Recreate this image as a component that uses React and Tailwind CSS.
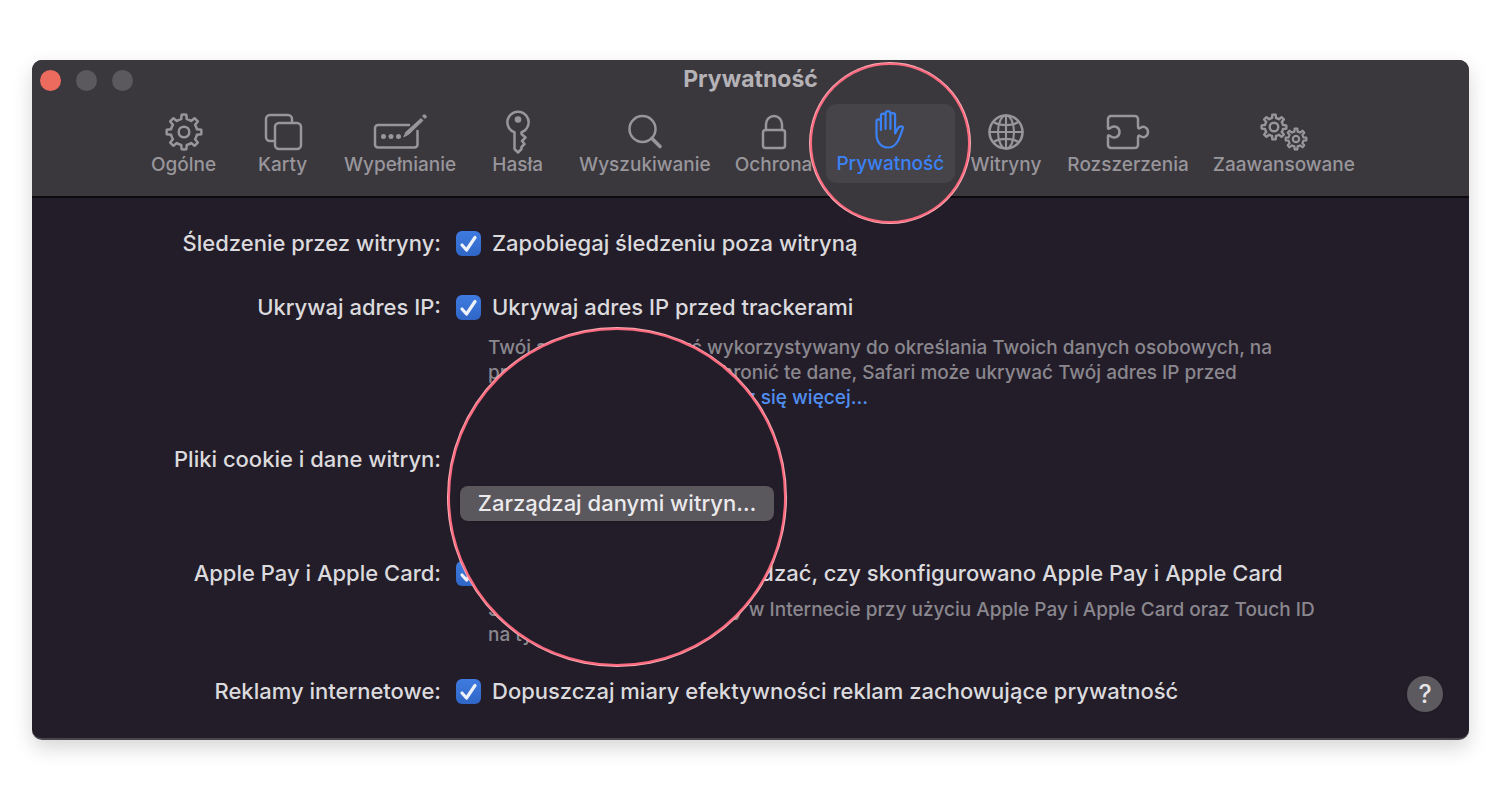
import { useState } from "react";

function gearPath(cx, cy, outer, inner, teeth = 8) {
  const step = (Math.PI * 2) / teeth;
  const point = (r, a) =>
    `${(cx + r * Math.sin(a)).toFixed(2)} ${(cy - r * Math.cos(a)).toFixed(2)}`;
  let d = "";
  for (let i = 0; i < teeth; i++) {
    const a = i * step;
    d += `${i === 0 ? "M" : "L"}${point(inner, a - step * 0.27)}`;
    d += `L${point(outer, a - step * 0.17)}`;
    d += `A${outer} ${outer} 0 0 1 ${point(outer, a + step * 0.17)}`;
    d += `L${point(inner, a + step * 0.27)}`;
    d += `A${inner} ${inner} 0 0 1 ${point(inner, a + step * 0.73)}`;
  }
  return d + "Z";
}

function Icon({ width, height = 44, children }) {
  return (
    <svg
      width={width}
      height={height}
      viewBox={`0 0 ${width} ${height}`}
      className="shrink-0"
      fill="none"
      stroke="currentColor"
      strokeWidth="2.5"
      strokeLinecap="round"
      strokeLinejoin="round"
      aria-hidden="true"
    >
      {children}
    </svg>
  );
}

const GearIcon = () => (
  <Icon width={40}>
    <path d={gearPath(20, 22, 17.4, 13.2)} />
    <circle cx="20" cy="22" r="5.3" />
  </Icon>
);

const TabsIcon = () => (
  <Icon width={40}>
    <path d="M10 31H7a4 4 0 0 1-4-4V9a4 4 0 0 1 4-4h18a4 4 0 0 1 4 4v3" />
    <rect x="12" y="13" width="26" height="26" rx="4" />
  </Icon>
);

const AutofillIcon = () => (
  <Icon width={54}>
    <path d="M36 15H5a3 3 0 0 0-3 3v16.500a3 3 0 0 0 3 3h36.500a3 3 0 0 0 3-3V21" />
    <path d="M31 26.500L33 22L48 8.500L50 10.500L36 24Z" fill="currentColor" strokeWidth="1" />
    <path d="M51.200 6L52 6.800" strokeWidth="3.400" />
    <g fill="currentColor" stroke="none">
      <circle cx="10.500" cy="26.500" r="2.500" />
      <circle cx="18" cy="26.500" r="2.500" />
      <circle cx="25.500" cy="26.500" r="2.500" />
    </g>
  </Icon>
);

const KeyIcon = () => (
  <Icon width={28}>
    <path d="M10.500 22.300A10.600 10.600 0 1 1 17.500 22.300V24L21.500 27.500L18 31L20.500 34L17.500 37V39L14 42.500L10.500 39Z" />
    <circle cx="14" cy="9.500" r="3.300" fill="currentColor" stroke="none" />
  </Icon>
);

const SearchIcon = () => (
  <Icon width={36}>
    <circle cx="15.500" cy="19" r="13" />
    <path d="M25 28.500L33 36.500" strokeWidth="3.600" />
  </Icon>
);

const LockIcon = () => (
  <Icon width={28}>
    <rect x="3" y="20" width="22" height="18" rx="2.500" />
    <path d="M6 20V14a8 8 0 0 1 16 0V20" />
  </Icon>
);

const HandIcon = () => (
  <Icon width={32}>
    <path
      d="M2.500 25V12.500a2.200 2.200 0 0 1 4.400 0V21V7a2.300 2.300 0 0 1 4.700 0V20V4.500a2.300 2.300 0 0 1 4.800 0V20V6.500a2.300 2.300 0 0 1 4.700 0V24.500L23.600 19.800C24.800 17.200 28.400 16.600 29 18.200C29.200 19 27.800 22 26.500 26C24 34 20.500 38.500 14.500 38.500C7.500 38.500 2.500 33.500 2.500 25Z"
      strokeWidth="2.200"
    />
  </Icon>
);

const GlobeIcon = () => (
  <Icon width={38}>
    <circle cx="19" cy="22" r="16.500" />
    <ellipse cx="19" cy="22" rx="8" ry="16.500" strokeWidth="2.100" />
    <path
      d="M19 5.500V38.500M2.500 22H35.500M6.500 12C13 16.200 25 16.200 31.500 12M6.500 32C13 27.800 25 27.800 31.500 32"
      strokeWidth="2.100"
    />
  </Icon>
);

const PuzzleIcon = () => (
  <Icon width={44}>
    <path d="M2 18V9a3 3 0 0 1 3-3H29a3 3 0 0 1 3 3V16.500C32 19 33 18.600 34.500 17.700C38 15.500 42 18 42 22C42 26 38 28.500 34.500 26.300C33 25.400 32 25 32 27.500V35a3 3 0 0 1-3 3H5a3 3 0 0 1-3-3V26.500C2 24.500 3.500 25.500 5 26.500C9 29 13.500 26.500 13.500 22C13.500 17.500 9 15 5 17.500C3.500 18.500 2 19.500 2 18Z" />
  </Icon>
);

const GearsIcon = () => (
  <Icon width={50}>
    <path d={gearPath(15, 17, 12.4, 9.2)} strokeWidth="2.400" />
    <circle cx="15" cy="17" r="4.300" strokeWidth="2.400" />
    <path d={gearPath(37, 29, 10.4, 7.6)} strokeWidth="2.200" />
    <circle cx="37" cy="29" r="3.200" strokeWidth="2.200" />
  </Icon>
);

const TABS = [
  { label: "Ogólne", icon: GearIcon },
  { label: "Karty", icon: TabsIcon },
  { label: "Wypełnianie", icon: AutofillIcon },
  { label: "Hasła", icon: KeyIcon },
  { label: "Wyszukiwanie", icon: SearchIcon },
  { label: "Ochrona", icon: LockIcon },
  { label: "Prywatność", icon: HandIcon, active: true },
  { label: "Witryny", icon: GlobeIcon },
  { label: "Rozszerzenia", icon: PuzzleIcon },
  { label: "Zaawansowane", icon: GearsIcon },
];

function ToolbarTab({ label, icon: TabIcon, active }) {
  if (active) {
    return (
      <div className="relative w-[132px]">
        <div className="absolute top-1/2 left-1/2 z-10 flex size-[160px] -translate-x-1/2 -translate-y-1/2 items-center justify-center rounded-full border-2 border-[#fb6a7e] bg-[#3a373d] ring-1 ring-[#fda9b3]">
          <button
            type="button"
            aria-current="page"
            className="flex h-[79px] w-[129px] shrink-0 flex-col items-center rounded-[10px] bg-[#464349] pt-[5px] text-[#3b82f6]"
          >
            <TabIcon />
            <span className="text-[19px] leading-[22px] font-medium">{label}</span>
          </button>
        </div>
      </div>
    );
  }

  return (
    <button
      type="button"
      className="flex min-w-[99px] flex-col items-center px-3 text-[#98969b]"
    >
      <TabIcon />
      <span className="text-[19px] leading-[22px] font-medium">{label}</span>
    </button>
  );
}

function Row({ label, className, children }) {
  return (
    <div className={`grid grid-cols-[409px_1fr] ${className}`}>
      <div className="text-right text-[22px] leading-7 font-medium whitespace-nowrap">{label}</div>
      <div className="pl-[15px]">{children}</div>
    </div>
  );
}

function CheckOption({ label }) {
  const [checked, setChecked] = useState(true);

  return (
    <label className="flex items-center gap-[11px] text-[22px] leading-7 font-medium whitespace-nowrap">
      <span className="grid">
        <input
          type="checkbox"
          checked={checked}
          onChange={(e) => setChecked(e.target.checked)}
          className="col-start-1 row-start-1 size-[25px] appearance-none rounded-md bg-[#5c595f] checked:bg-linear-to-b checked:from-[#3f7ce0] checked:to-[#2f66c6]"
        />
        {checked && (
          <svg
            viewBox="0 0 25 25"
            fill="none"
            stroke="#eef2fb"
            strokeWidth="3.2"
            strokeLinecap="round"
            strokeLinejoin="round"
            className="pointer-events-none col-start-1 row-start-1 size-[25px]"
            aria-hidden="true"
          >
            <path d="M6 14L10.500 19L19 6.500" />
          </svg>
        )}
      </span>
      {label}
    </label>
  );
}

export default function App() {
  return (
    <div className="min-h-screen bg-white py-15 pr-[31px] pl-8 font-['Inter','Liberation_Sans',sans-serif]">
      <main className="overflow-hidden rounded-[10px] border-b-2 border-[#4a464e] bg-[#231d29] text-[#dbdadd] shadow-[0_8px_20px_rgba(0,0,0,0.16)]">
        <header className="border-b-2 border-[#0c0a0e] bg-[#3a373d]">
          <div className="grid h-10 grid-cols-[1fr_auto_1fr] items-center">
            <div className="flex gap-[15px] pl-2">
              <button type="button" aria-label="Zamknij" className="size-[21px] rounded-full bg-[#ed6a5e]" />
              <button type="button" aria-label="Minimalizuj" className="size-[21px] rounded-full bg-[#5b585e]" />
              <button type="button" aria-label="Powiększ" className="size-[21px] rounded-full bg-[#5b585e]" />
            </div>
            <h1 className="pb-0.5 text-[23px] leading-7 font-bold text-[#b4b2b6]">Prywatność</h1>
          </div>
          <nav className="flex h-24 justify-center pt-[10px] pb-5" aria-label="Ustawienia">
            {TABS.map((tab) => (
              <ToolbarTab key={tab.label} {...tab} />
            ))}
          </nav>
        </header>

        <div className="flex flex-col pt-[31px] pb-[26px]">
          <Row label="Śledzenie przez witryny:">
            <CheckOption label="Zapobiegaj śledzeniu poza witryną" />
          </Row>

          <Row label="Ukrywaj adres IP:" className="mt-9">
            <CheckOption label="Ukrywaj adres IP przed trackerami" />
            <p className="mt-[14px] pl-8 text-[19px] leading-[25px] font-medium whitespace-nowrap text-[#8a878e]">
              Twój adres IP może być wykorzystywany do określania Twoich danych osobowych, na
              <br />
              przykład położenia. Aby chronić te dane, Safari może ukrywać Twój adres IP przed
              <br />
              znanymi trackerami.{" "}
              <a href="#wiecej" className="text-[#4f8ff0]">
                Dowiedz się więcej…
              </a>
            </p>
          </Row>

          <Row label="Pliki cookie i dane witryn:" className="relative z-10 mt-[35px]">
            <div className="relative">
              <div className="absolute -top-[117px] -left-2 flex size-[338px] items-center justify-center rounded-full border-2 border-[#fb6a7e] bg-[#231d29] pt-3 ring-1 ring-[#fda9b3]">
                <button
                  type="button"
                  className="h-[35px] w-[314px] rounded-lg bg-[#5a575d] text-[22px] leading-7 font-medium text-[#ebeaec] shadow-sm"
                >
                  Zarządzaj danymi witryn…
                </button>
              </div>
            </div>
          </Row>

          <Row label="Apple Pay i Apple Card:" className="mt-[86px]">
            <CheckOption label="Pozwalaj witrynom sprawdzać, czy skonfigurowano Apple Pay i Apple Card" />
            <p className="mt-[10px] pl-8 text-[19px] leading-[25px] font-medium whitespace-nowrap text-[#8a878e]">
              Safari pozwala robić zakupy w Internecie przy użyciu Apple Pay i Apple Card oraz Touch ID
              <br />
              na tym Macu.
            </p>
          </Row>

          <div className="mt-[29px] flex items-start">
            <Row label="Reklamy internetowe:" className="grow pt-px">
              <CheckOption label="Dopuszczaj miary efektywności reklam zachowujące prywatność" />
            </Row>
            <button
              type="button"
              aria-label="Pomoc"
              className="mr-[26px] size-9 rounded-full bg-[#5c595f] text-[25px] leading-9 font-medium text-[#e4e3e5] shadow-sm"
            >
              ?
            </button>
          </div>
        </div>
      </main>
    </div>
  );
}
